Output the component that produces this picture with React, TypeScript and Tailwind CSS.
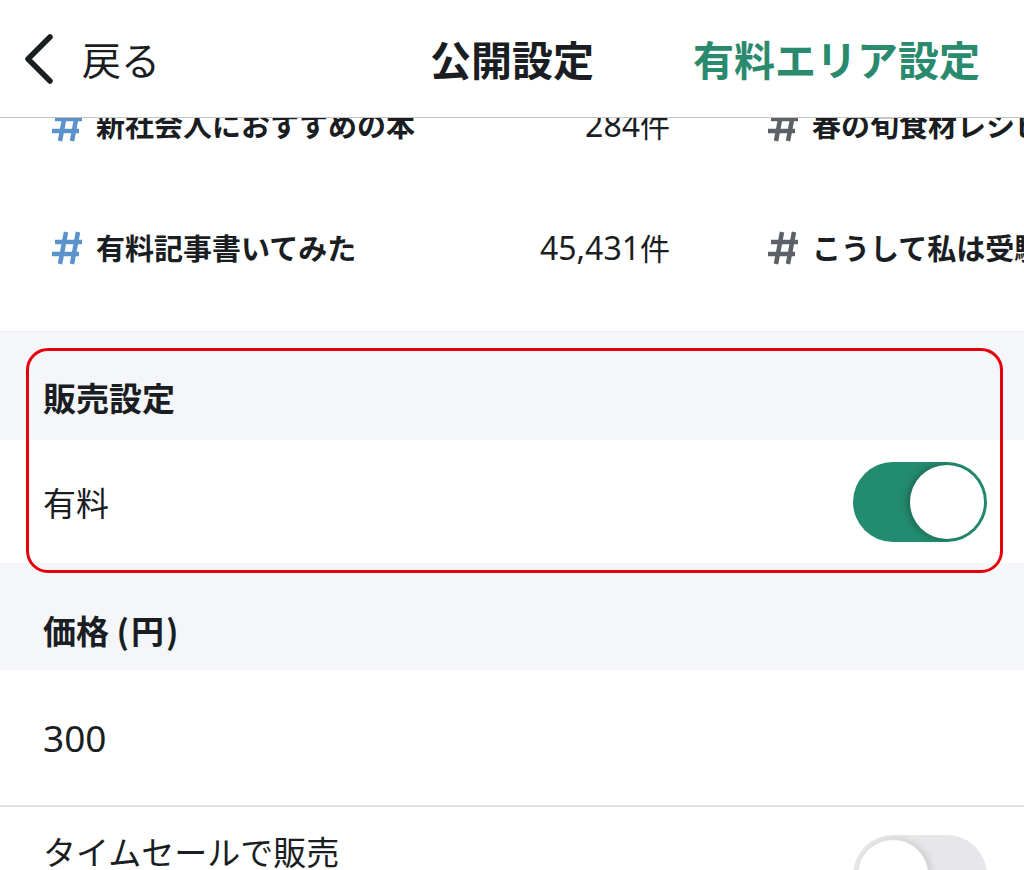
import React from "react";

const jp = { fontFamily: '"Noto Sans CJK JP", "Noto Sans", sans-serif' };
const num = { fontFamily: '"Noto Sans", "Noto Sans CJK JP", sans-serif' };

function Hash({ color }: { color: string }) {
  return (
    <svg width="30" height="35" viewBox="0 0 30 35" className="shrink-0">
      <g stroke={color} strokeWidth="4.5" strokeLinecap="butt" fill="none">
        <line x1="14" y1="2" x2="8" y2="34" />
        <line x1="26" y1="2" x2="20" y2="34" />
        <line x1="3" y1="12" x2="30" y2="12" />
        <line x1="0" y1="24" x2="27" y2="24" />
      </g>
    </svg>
  );
}

const tagRows = [
  { left: "新社会人におすすめの本", count: "284", right: "春の旬食材レシピ" },
  { left: "有料記事書いてみた", count: "45,431", right: "こうして私は受験に合格した" },
];

function Toggle({ on }: { on: boolean }) {
  return on ? (
    <div className="w-[134px] h-[80px] rounded-full bg-[#238b6f] flex items-center justify-end pr-[3px]">
      <div className="w-[74px] h-[74px] rounded-full bg-white shadow-[-3px_0_6px_rgba(0,0,0,0.25)]" />
    </div>
  ) : (
    <div className="w-[134px] h-[80px] rounded-full bg-[#e7e7ea] flex items-center justify-start pl-[4px]">
      <div className="w-[72px] h-[72px] rounded-full bg-white border border-[#e2e2e2] shadow-[3px_0_6px_rgba(0,0,0,0.12)]" />
    </div>
  );
}

export default function App() {
  return (
    <main className="relative w-[1024px] h-[870px] overflow-hidden bg-white text-[#1a1e23]" style={jp}>
      <header className="relative z-10 h-[118px] bg-white border-b border-[#c4c4c4] grid grid-cols-[1fr_auto_1fr] items-center">
        <div className="flex items-center pl-[22px]">
          <svg width="34" height="52" viewBox="0 0 34 52">
            <path d="M28 4 L6 26 L28 48" stroke="#1a1e23" strokeWidth="5.5" strokeLinecap="round" strokeLinejoin="round" fill="none" />
          </svg>
          <span className="ml-[26px] text-[39px] leading-none">戻る</span>
        </div>
        <div className="text-[41px] font-bold leading-none">公開設定</div>
        <div className="justify-self-end pr-[44px] text-[41px] font-semibold leading-none text-[#2a8a6d]">有料エリア設定</div>
      </header>

      <section className="-mt-[55px] pb-[22px] bg-white border-b border-[#e6eaee] overflow-hidden">
        {tagRows.map((r) => (
          <div key={r.left} className="h-[123px] flex items-center pl-[52px] gap-[98px] whitespace-nowrap">
            <div className="w-[618px] shrink-0 flex items-center">
              <Hash color="#5b92cb" />
              <span className="ml-[14px] text-[29px] font-bold">{r.left}</span>
              <span className="ml-auto text-[30px]">
                <span className="text-[32px]" style={num}>{r.count}</span>件
              </span>
            </div>
            <div className="shrink-0 flex items-center">
              <Hash color="#5d6167" />
              <span className="ml-[14px] text-[29px] font-bold">{r.right}</span>
            </div>
          </div>
        ))}
      </section>

      <div className="h-[108px] bg-[#f4f6f9] flex items-end pl-[43px] pb-[23px]">
        <h2 className="text-[33px] font-bold leading-[40px]">販売設定</h2>
      </div>
      <div className="h-[123px] bg-white flex items-center justify-between pl-[43px] pr-[37px]">
        <span className="text-[33px] leading-[40px]">有料</span>
        <Toggle on />
      </div>

      <div className="h-[107px] bg-[#f4f6f9] flex items-end pl-[43px] pb-[20px]">
        <h2 className="text-[33px] font-bold leading-[40px]">
          価格 <span className="tracking-[2px]">(円)</span>
        </h2>
      </div>
      <div className="h-[135px] bg-white flex items-center pl-[43px]">
        <span className="text-[37px] leading-[40px]" style={num}>300</span>
      </div>
      <div className="h-[2px] bg-[#e2e2e2]" />
      <div className="h-[130px] bg-white flex items-start justify-between pl-[43px] pr-[37px]">
        <span className="mt-[24px] text-[33px] leading-[40px]">タイムセールで販売</span>
        <div className="mt-[28px]">
          <Toggle on={false} />
        </div>
      </div>

      <div className="absolute left-[26px] top-[348px] w-[977px] h-[225px] rounded-[22px] border-[3.5px] border-[#e6000c] pointer-events-none" />
    </main>
  );
}
